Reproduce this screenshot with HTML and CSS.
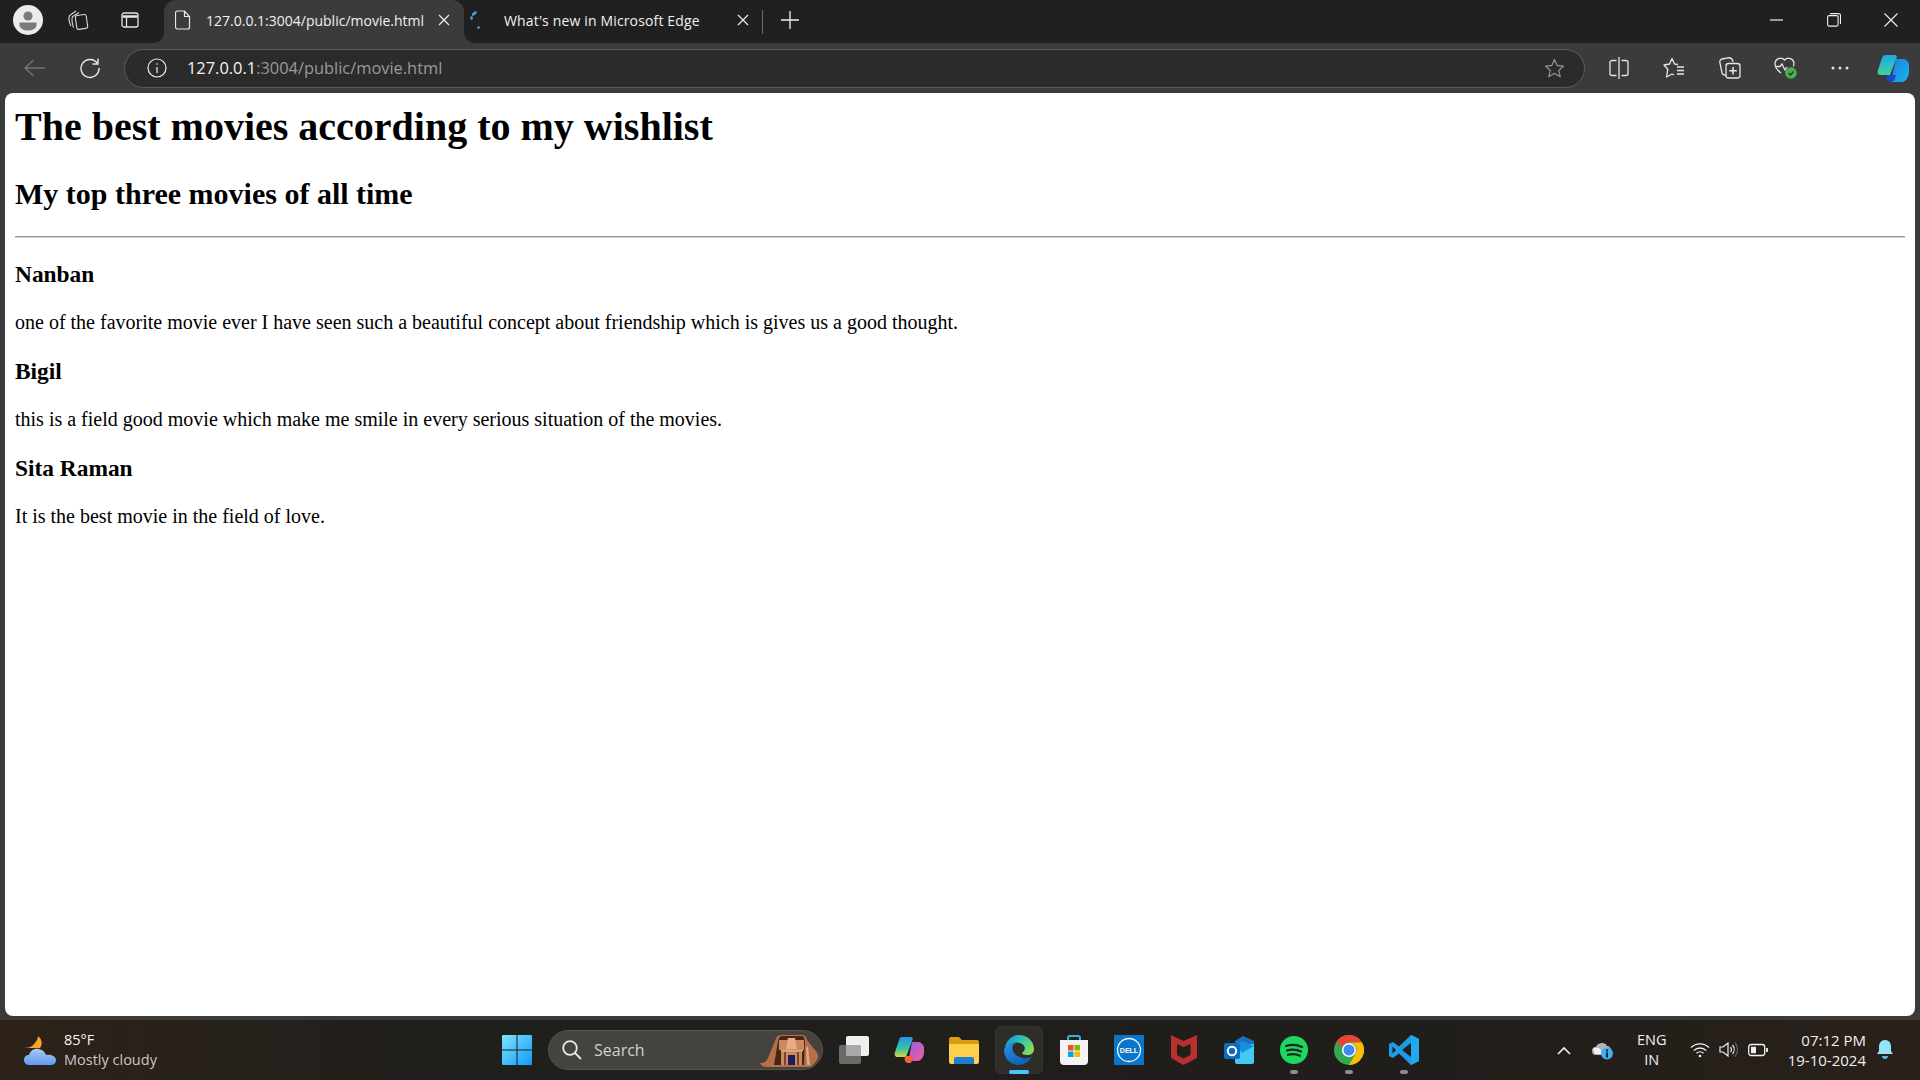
FILE: index.html
```html
<!DOCTYPE html>
<html lang="en">
<head>
<meta charset="utf-8">
<title>The best movies</title>
<link rel="stylesheet" href="styles.css">
</head>
<body>
<div class="app">
  <header class="tabstrip">
    <div class="strip-left">
      <svg class="avatar" width="30" height="30" viewBox="0 0 30 30"><circle cx="15" cy="15" r="15" fill="#ececec"/><circle cx="15" cy="11" r="4.600" fill="#7a7a7a"/><path d="M6.500 17.500h17v2.500c0 3.500-4 5.500-8.500 5.500S6.500 23.500 6.500 20z" fill="#7a7a7a"/></svg>
      <svg class="strip-ic ws" width="22" height="22" viewBox="0 0 22 22" fill="none" stroke="#d8d8d8" stroke-width="1.100"><path d="M4 17C2 13 1.500 9 2.500 6.500L9 2"/><path d="M6.500 18.500C5 14 4.500 10 5.500 7.500L12 3.500"/><rect x="9" y="6" width="11" height="14" rx="2" transform="rotate(-8 14 13)"/></svg>
      <svg class="strip-ic tabs" width="18" height="18" viewBox="0 0 18 18" fill="none" stroke="#e6e6e6" stroke-width="1.300"><rect x="1" y="2" width="16" height="14" rx="2"/><path d="M5.500 6v10"/><path d="M1.500 5.500h15" stroke-width="2.500"/></svg>
    </div>
    <div class="tab active">
      <svg width="16" height="20" viewBox="0 0 16 20" fill="none" stroke="#e8e8e8" stroke-width="1.200"><path d="M2.500 1h7l5 5.500V17a2 2 0 0 1-2 2h-10a2 2 0 0 1-2-2V3a2 2 0 0 1 2-2z"/><path d="M9.500 1v5.500h5"/></svg>
      <span class="tab-title">127.0.0.1:3004/public/movie.html</span>
      <svg class="tab-x" width="12" height="12" viewBox="0 0 12 12" stroke="#e8e8e8" stroke-width="1.300"><path d="M1 1l10 10M11 1L1 11"/></svg>
    </div>
    <div class="tab other">
      <svg class="spin" width="14" height="20" viewBox="0 0 14 20" fill="none" stroke="#4a9fd8" stroke-width="2.600" stroke-linecap="round"><path d="M6.500 2.500L4 4.500"/><path d="M2.500 7.500v1"/><path d="M9.500 17.500h.1"/></svg>
      <span class="tab-title">What's new in Microsoft Edge</span>
      <svg class="tab-x" width="12" height="12" viewBox="0 0 12 12" stroke="#e8e8e8" stroke-width="1.300"><path d="M1 1l10 10M11 1L1 11"/></svg>
    </div>
    <span class="tab-sep"></span>
    <svg class="plus" width="18" height="18" viewBox="0 0 18 18" stroke="#f0f0f0" stroke-width="1.300"><path d="M9 0v18M0 9h18"/></svg>
    <div class="winctl">
      <svg width="14" height="14" viewBox="0 0 14 14" stroke="#f0f0f0" stroke-width="1.200"><path d="M0 7h13"/></svg>
      <svg width="14" height="14" viewBox="0 0 14 14" fill="none" stroke="#f0f0f0" stroke-width="1.100"><rect x=".6" y="2.600" width="10.500" height="10.500" rx="1.500"/><path d="M3 .6h8.500a2 2 0 0 1 2 2V11"/></svg>
      <svg width="14" height="14" viewBox="0 0 14 14" stroke="#f0f0f0" stroke-width="1.100"><path d="M.5.500l13 13M13.500.500l-13 13"/></svg>
    </div>
  </header>
  <nav class="toolbar">
    <svg class="back" width="22" height="18" viewBox="0 0 22 18" fill="none" stroke="#777" stroke-width="1.300"><path d="M21 9H1M9.500 1L1 9l8.500 8"/></svg>
    <svg class="reload" width="22" height="22" viewBox="0 0 22 22" fill="none" stroke="#ececec" stroke-width="1.400"><path d="M18.500 6.500A9 9 0 1 0 20 11"/><path d="M19 1.500v5.500h-5.500"/></svg>
    <div class="addr">
      <svg class="info" width="20" height="20" viewBox="0 0 20 20" fill="none" stroke="#f0f0f0" stroke-width="1.200"><circle cx="10" cy="10" r="9"/><path d="M10 9v6M10 5.300v1.500"/></svg>
      <span class="url"><span class="host">127.0.0.1</span>:3004/public/movie.html</span>
      <svg class="star" width="21" height="21" viewBox="0 0 21 21" fill="none" stroke="#8d8d8d" stroke-width="1.300" stroke-linejoin="round"><path d="M10.500 1.500l2.700 6 6.300.6-4.800 4.300 1.500 6.300-5.700-3.300-5.700 3.300 1.500-6.300L1.500 8.100l6.300-.6z"/></svg>
    </div>
    <div class="tools">
      <svg width="20" height="22" viewBox="0 0 20 22" fill="none" stroke="#e6e6e6" stroke-width="1.300"><path d="M10 0v22"/><path d="M7.500 3.500H3a2 2 0 0 0-2 2v11a2 2 0 0 0 2 2h4.500M12.500 3.500H17a2 2 0 0 1 2 2v11a2 2 0 0 1-2 2h-4.500"/></svg>
      <svg width="22" height="22" viewBox="0 0 22 22" fill="none" stroke="#e6e6e6" stroke-width="1.300" stroke-linejoin="round"><path d="M15 7.500L11.500 7 9 1.500 6.500 7 1 8l3.800 4.200L3.500 20 9 17l2 1"/><path d="M14 10h7M14 13.500h7M14 17h7"/></svg>
      <svg width="22" height="22" viewBox="0 0 22 22" fill="none" stroke="#e6e6e6" stroke-width="1.300"><path d="M7 18H5.500a3 3 0 0 1-2.500-2L1 6a3 3 0 0 1 2-4l6-1.200c2.500-.3 4.500 1 5 4"/><rect x="7" y="6.500" width="14" height="14.500" rx="2.500"/><path d="M14 10v7.500M10.200 13.700h7.600" stroke-width="1.600"/></svg>
      <svg class="health" width="24" height="24" viewBox="0 0 24 24" fill="none"><path d="M7 17C3 14 1 11 1 7.500A5.500 5.500 0 0 1 10.500 4a5.500 5.500 0 0 1 9.500 3.500c0 1-.2 2-.7 3" stroke="#e6e6e6" stroke-width="1.300"/><path d="M1.500 10.500H6l2-2.500 3 6 2-3" stroke="#e6e6e6" stroke-width="1.300"/><circle cx="17" cy="17" r="5.800" fill="#4caf50"/><path d="M14.500 17l2 2 3-3.500" stroke="#1c3d1e" stroke-width="1.500"/></svg>
      <svg class="dots" width="18" height="6" viewBox="0 0 18 6" fill="#e6e6e6"><circle cx="2" cy="3" r="1.500"/><circle cx="9" cy="3" r="1.500"/><circle cx="16" cy="3" r="1.500"/></svg>
      <svg class="copilot" width="32" height="28" viewBox="0 0 32 28"><defs><linearGradient id="cpa" x1="0" y1="0" x2="0" y2="1"><stop offset="0" stop-color="#1fa8e6"/><stop offset="1" stop-color="#3fd29a"/></linearGradient><linearGradient id="cpb" x1="0" y1="0" x2="1" y2="1"><stop offset="0" stop-color="#1d7fe0"/><stop offset="1" stop-color="#16b5ee"/></linearGradient></defs><path d="M9 1h9c2 0 2 2 1.500 3L13 21H4c-3 0-4-2-3-5L5 4c.6-2 2-3 4-3z" fill="url(#cpa)"/><path d="M19 5h7c3 0 5 2 6 5l0 8c0 4-3 10-7 10h-9c-2 0-2-2-1.500-3z" fill="url(#cpb)"/><path d="M10 21h9l-2 6h-5c-3 0-3-3-2-6z" fill="#1c45c9"/></svg>
    </div>
  </nav>
  <main class="page">
    <h1 class="title">The best movies according to my wishlist</h1>
    <h2 class="subtitle">My top three movies of all time</h2>
    <hr class="rule">
    <h3 class="movie">Nanban</h3>
    <p class="blurb">one of the favorite movie ever I have seen such a beautiful concept about friendship which is gives us a good thought.</p>
    <h3 class="movie">Bigil</h3>
    <p class="blurb">this is a field good movie which make me smile in every serious situation of the movies.</p>
    <h3 class="movie">Sita Raman</h3>
    <p class="blurb">It is the best movie in the field of love.</p>
  </main>
  <footer class="taskbar">
    <div class="weather">
      <svg width="34" height="30" viewBox="0 0 34 30"><defs><linearGradient id="cl" x1="0" y1="0" x2="0" y2="1"><stop offset="0" stop-color="#a9c8fa"/><stop offset="1" stop-color="#5f9bec"/></linearGradient></defs><path d="M15 1c4 3 5 8 2 12H1c4 0 8-1 10-4 2-2 4-5 4-8z" fill="#f5a623"/><path d="M7 30c-4 0-6-2-6-5s2-5 5-5c1-4 5-7 10-6 4 1 6 3 7 6 6-1 10 2 10 5 0 3-2 5-6 5z" fill="url(#cl)"/></svg>
      <div class="weather-text"><span class="temp">85°F</span><span class="cond">Mostly cloudy</span></div>
    </div>
    <div class="center">
      <svg class="start" width="30" height="30" viewBox="0 0 30 30"><defs><linearGradient id="win" x1="0" y1="0" x2="1" y2="1"><stop offset="0" stop-color="#7fe3ff"/><stop offset="1" stop-color="#0f9cf5"/></linearGradient></defs><path d="M0 1a1 1 0 0 1 1-1h13.500v14.500H0zM15.500 0H29a1 1 0 0 1 1 1v13.500H15.500zM0 15.500h14.500V30H1a1 1 0 0 1-1-1zM15.500 15.500H30V29a1 1 0 0 1-1 1H15.500z" fill="url(#win)"/></svg>
      <div class="search">
        <svg width="20" height="20" viewBox="0 0 20 20" fill="none" stroke="#e8e8e8" stroke-width="1.800"><circle cx="8" cy="8" r="6.800"/><path d="M13 13l6 6"/></svg>
        <span class="search-text">Search</span>
        <svg class="petra" width="60" height="36" viewBox="0 0 60 36"><path d="M0 31c4 0 6-1 8-5L15 9c1-4 3-6 6-6h21c3 0 4 2 5 5l7 9c3 3 5 6 4 9-2 4-5 8-8 9H8C4 35 1 34 0 31z" fill="#b4704a"/><path d="M14 33L18 9c.5-3 2-5 4-5h20c2 0 2 2 3 5l-1 24z" fill="#4a2516"/><path d="M19 8h25v10H19zM21 19h21v14H21z" fill="#c98a62"/><path d="M28 6h7l2 11h-11z" fill="#e6ad85"/><path d="M21 18h22v1.500H21z" fill="#e6ad85"/><rect x="24" y="20" width="2" height="13" fill="#7a4528"/><rect x="37" y="20" width="2" height="13" fill="#7a4528"/><rect x="28" y="23" width="7" height="10" fill="#1c1a60"/><path d="M48 14l2 19h-3l-1-17z" fill="#e0a98a"/></svg>
      </div>
      <div class="apps">
        <div class="app-btn"><svg width="30" height="28" viewBox="0 0 30 28"><rect x="0" y="9" width="22" height="19" rx="2" fill="#6a6a6a"/><rect x="7" y="0" width="23" height="20" rx="2" fill="#efefef"/><rect x="7" y="9" width="15" height="11" fill="#a9a9a9"/></svg></div>
        <div class="app-btn"><svg width="30" height="28" viewBox="0 0 30 28"><defs><linearGradient id="c2a" x1="0" y1="0" x2="0" y2="1"><stop offset="0" stop-color="#2a8fe8"/><stop offset=".6" stop-color="#35c7a0"/><stop offset="1" stop-color="#d4d63a"/></linearGradient><linearGradient id="c2b" x1="0" y1="0" x2="1" y2="1"><stop offset="0" stop-color="#9a5ce0"/><stop offset="1" stop-color="#f0609a"/></linearGradient></defs><path d="M8 1h9c2 0 2 2 1.500 3L12 21H4c-3 0-4-2-3-5L5 4c.6-2 1-3 3-3z" fill="url(#c2a)"/><path d="M18 6h6c3 0 5 2 6 5v6c0 3-3 8-6 8h-8c-2 0-2-2-1-3z" fill="url(#c2b)"/><path d="M11 20h8l-2 7h-3c-3 0-4-3-3-7z" fill="#f0643a"/></svg></div>
        <div class="app-btn"><svg width="30" height="28" viewBox="0 0 30 28"><path d="M0 3a2 2 0 0 1 2-2h8l3 3h15a2 2 0 0 1 2 2v3H0z" fill="#d99e10"/><path d="M0 8h30v18a2 2 0 0 1-2 2H2a2 2 0 0 1-2-2z" fill="#fdd04b"/><path d="M5 28v-5a2 2 0 0 1 2-2h16a2 2 0 0 1 2 2v5z" fill="#1b7ed0"/></svg></div>
        <div class="app-btn edge"><svg width="30" height="30" viewBox="0 0 30 30"><defs><linearGradient id="eg" x1="0" y1="0" x2="1" y2=".6"><stop offset="0" stop-color="#1588d0"/><stop offset=".55" stop-color="#2fc4b4"/><stop offset="1" stop-color="#86dc5a"/></linearGradient><linearGradient id="eb" x1="0" y1="0" x2=".6" y2="1"><stop offset="0" stop-color="#2295e6"/><stop offset="1" stop-color="#0d62b4"/></linearGradient></defs><path d="M1 12C3 4 9 0 15 0c9 0 15 7 15 14 0 4-3 6-7 6-3 0-5-1-5-2 2-2 4-4 2-7-2-4-10-5-15-1-2 1-3 2-4 2z" fill="url(#eg)"/><path d="M0 15C2 9 7 6.500 12 8c-4 1-4 5-3 8 2 5 8 8 14 7 2 0 4-1 5-2-3 6-8 9-13 9C6 30 0 23 0 15z" fill="url(#eb)"/></svg><span class="pip on"></span></div>
        <div class="app-btn"><svg width="30" height="30" viewBox="0 0 30 30"><path d="M9 5V3a2 2 0 0 1 2-2h8a2 2 0 0 1 2 2v2" fill="none" stroke="#2bb5ee" stroke-width="2"/><path d="M1 5h28v21a4 4 0 0 1-4 4H5a4 4 0 0 1-4-4z" fill="#f3f3f3"/><rect x="9" y="10" width="5.500" height="5.500" fill="#f25022"/><rect x="15.500" y="10" width="5.500" height="5.500" fill="#7fba00"/><rect x="9" y="16.500" width="5.500" height="5.500" fill="#00a4ef"/><rect x="15.500" y="16.500" width="5.500" height="5.500" fill="#ffb900"/></svg></div>
        <div class="app-btn"><svg width="30" height="30" viewBox="0 0 30 30"><rect width="30" height="30" fill="#0b76c9"/><circle cx="15" cy="15" r="11.500" fill="none" stroke="#f2f8fc" stroke-width="1.300"/><text x="15" y="17.500" class="dell">DELL</text></svg></div>
        <div class="app-btn"><svg width="28" height="30" viewBox="0 0 28 30"><path d="M1 0l12.500 6L27 0v23l-13.500 7L1 23z" fill="#b8302e"/><path d="M7 9l6.500 3 7-3v11l-7 3.500L7 20z" fill="#1f1f1c"/></svg></div>
        <div class="app-btn"><svg width="30" height="28" viewBox="0 0 30 28"><path d="M11 5l8-5 11 5v6H11z" fill="#1f6fc0"/><path d="M11 8h19v18a2 2 0 0 1-2 2H13a2 2 0 0 1-2-2z" fill="#44c8f5"/><path d="M11 8l8-3 11 5-12 7z" fill="#1490df"/><rect x="0" y="7" width="16" height="16" rx="2" fill="#0f6cbd"/><circle cx="8" cy="15" r="4.200" fill="none" stroke="#fff" stroke-width="2"/></svg></div>
        <div class="app-btn"><svg width="28" height="28" viewBox="0 0 28 28" fill="none"><circle cx="14" cy="14" r="14" fill="#1ed760"/><path d="M6 10c6-2 11-1.500 16 1M7 14.500c5-1.500 10-1 14 1M8 18.800c4-1 8-.8 12 .9" stroke="#17261b" stroke-width="2.200" stroke-linecap="round"/></svg><span class="pip"></span></div>
        <div class="app-btn"><svg width="30" height="30" viewBox="0 0 30 30"><circle cx="15" cy="15" r="15" fill="#34a853"/><path d="M15 0a15 15 0 0 1 13 7.500H15a7.500 7.500 0 0 0-7 4.500L2.200 7A15 15 0 0 1 15 0z" fill="#ea4335"/><path d="M28 7.500A15 15 0 0 1 15 30l6.500-11.200A7.500 7.500 0 0 0 15 7.500z" fill="#fbbc04"/><circle cx="15" cy="15" r="7" fill="#fff"/><circle cx="15" cy="15" r="5.500" fill="#4285f4"/></svg><span class="pip"></span></div>
        <div class="app-btn"><svg width="30" height="30" viewBox="0 0 30 30"><path d="M22 0l8 4v22l-8 4-12-11.500-6 4.500-4-2V9l4-2 6 4.500z" fill="#1a9ce8"/><path d="M22 0l8 4v22l-8 4z" fill="#22a7f0"/><path d="M22 8v14l-9-7z" fill="#1f1f1c"/><path d="M3.500 11.500v7L7 15z" fill="#1f1f1c"/></svg><span class="pip"></span></div>
      </div>
    </div>
    <div class="tray">
      <svg class="chev" width="14" height="9" viewBox="0 0 14 9" fill="none" stroke="#f0f0f0" stroke-width="1.600"><path d="M1 8l6-6 6 6"/></svg>
      <svg class="cloud" width="22" height="20" viewBox="0 0 22 20"><path d="M4 15a4 4 0 0 1 0-8c1-4 9-6 11-1 3 0 5 3 4 9z" fill="#aeb4ba"/><path d="M1 9c2-2 5-2 8 1v4H3z" fill="#f0f0f0"/><circle cx="15" cy="13.500" r="6" fill="#3fb0f0"/><rect x="14" y="12.500" width="2" height="5" fill="#10202c"/><rect x="14" y="9.500" width="2" height="2" fill="#10202c"/></svg>
      <div class="lang"><span>ENG</span><span>IN</span></div>
      <div class="status">
        <svg width="20" height="16" viewBox="0 0 20 16" fill="none" stroke="#f0f0f0" stroke-width="1.300"><path d="M1 5.500a13 13 0 0 1 18 0M3.800 8.500a9 9 0 0 1 12.400 0M6.500 11.300a5 5 0 0 1 7 0"/><circle cx="10" cy="14" r="1.300" fill="#f0f0f0" stroke="none"/></svg>
        <svg width="20" height="18" viewBox="0 0 20 18" fill="none" stroke="#f0f0f0" stroke-width="1.200"><path d="M1 6v5h3l5 4V2L4 6z"/><path d="M11.500 6a4 4 0 0 1 0 5M13.500 4a7 7 0 0 1 0 9"/><path d="M16 1.500a11 11 0 0 1 0 14" stroke="#666"/></svg>
        <svg width="20" height="14" viewBox="0 0 20 14" fill="none" stroke="#f0f0f0" stroke-width="1.300"><rect x=".7" y="1.500" width="16" height="11" rx="2.500"/><rect x="3" y="3.800" width="5" height="6.400" fill="#f0f0f0" stroke="none"/><path d="M19 5v4" stroke-width="1.800"/></svg>
      </div>
      <div class="clock"><span>07:12 PM</span><span>19-10-2024</span></div>
      <svg class="bell" width="16" height="20" viewBox="0 0 16 20"><path d="M8 0c4 0 6 3 6 7v4l2 3H0l2-3V7c0-4 2-7 6-7z" fill="#92e4fb"/><path d="M5 16h6c0 2-1.500 3-3 3s-3-1-3-3z" fill="#5fbcd8"/></svg>
    </div>
  </footer>
</div>
</body>
</html>
```
FILE: styles.css
```css
* { box-sizing: border-box; }
html, body { margin: 0; height: 100%; overflow: hidden; background: #3b3b3b; }
svg { display: block; flex: none; }
.app { display: flex; flex-direction: column; height: 1080px; font-family: "Open Sans", "Noto Sans", sans-serif; color: #f0f0f0; }

.tabstrip { height: 43px; flex: none; background: #202020; display: flex; align-items: center; }
.strip-left { width: 164px; display: flex; align-items: center; padding-left: 13px; margin-bottom: 3px; }
.strip-ic.ws { margin-left: 24px; }
.strip-ic.tabs { margin-left: 32px; }
.tab { height: 43px; display: flex; align-items: center; font-size: 14px; padding-bottom: 3px; position: relative; }
.tab.active { width: 300px; background: #3b3b3b; border-radius: 12px 12px 0 0; padding-left: 11px; }
.tab.active::before, .tab.active::after { content: ""; position: absolute; bottom: 0; width: 10px; height: 10px; }
.tab.active::before { left: -10px; background: radial-gradient(circle at 0 0, transparent 9.5px, #3b3b3b 10px); }
.tab.active::after { right: -10px; background: radial-gradient(circle at 100% 0, transparent 9.5px, #3b3b3b 10px); }
.tab.active .tab-title { margin-left: 15px; width: 232px; white-space: nowrap; }
.tab.other { width: 298px; padding-left: 5px; }
.tab.other .tab-title { margin-left: 21px; width: 233px; white-space: nowrap; letter-spacing: 0.15px; }
.tab-sep { width: 1px; height: 24px; background: #6a6a6a; }
.plus { margin-left: 18px; margin-bottom: 3px; }
.winctl { margin-left: auto; display: flex; align-items: center; gap: 43px; padding-right: 22px; margin-bottom: 3px; }

.toolbar { height: 50px; flex: none; background: #3b3b3b; display: flex; align-items: center; padding-left: 24px; }
.reload { margin-left: 33px; }
.addr { margin-left: 23px; width: 1461px; height: 39px; border: 1px solid #5c5c5c; border-radius: 20px; background: #2b2b2b; display: flex; align-items: center; padding-left: 22px; padding-right: 19px; }
.url { margin-left: 20px; margin-bottom: 2px; font-size: 16.4px; color: #9a9a9a; white-space: nowrap; }
.host { color: #f5f5f5; }
.star { margin-left: auto; }
.tools { margin-left: 24px; display: flex; align-items: center; gap: 34px; }
.health { margin-left: -1px; }
.dots { margin-left: -1px; }
.copilot { margin-left: -6px; }

.page { flex: none; height: 923px; margin: 0 5px; background: #fff; border-radius: 8px; padding: 10px; font-family: "Liberation Serif", serif; color: #000; font-size: 20px; }
.title { font-size: 40px; font-weight: 700; margin: 0 0 26.8px; }
.subtitle { font-size: 30px; font-weight: 700; margin: 24.9px 0; }
.rule { border: 0; border-top: 1px solid #999; border-bottom: 1px solid #ccc; margin: 10px 0; }
.movie { font-size: 23.4px; font-weight: 700; margin: 23.4px 0; }
.blurb { margin: 20px 0; }

.taskbar { margin-top: 4px; height: 60px; flex: none; background: linear-gradient(90deg, #2d2219 0%, #1f1f1c 25%, #201e1b 75%, #2a2019 100%); display: flex; align-items: center; position: relative; }
.weather { display: flex; align-items: center; padding-left: 23px; width: 502px; gap: 7px; }
.weather-text { display: flex; flex-direction: column; font-size: 14.5px; line-height: 20px; }
.temp { color: #f5f5f5; }
.cond { color: #c8c8c8; }
.center { display: flex; align-items: center; }
.start { margin-right: 16px; }
.search { width: 275px; height: 40px; border-radius: 20px; background: #45433d; border: 1px solid #55534c; display: flex; align-items: center; padding-left: 13px; position: relative; }
.search-text { margin-left: 12px; font-size: 16px; color: #d0d0d0; }
.petra { position: absolute; right: 2px; top: 1px; }
.apps { display: flex; align-items: center; margin-left: 3px; }
.app-btn { width: 55px; height: 48px; display: flex; align-items: center; justify-content: center; position: relative; }
.edge::before { content: ""; position: absolute; inset: 0 3.5px; background: #2f2d2a; border: 1px solid #363430; border-radius: 6px; }
.edge svg { position: relative; }
.pip { position: absolute; bottom: 0; left: 50%; width: 8px; height: 4px; margin-left: -4px; border-radius: 2px; background: #8d8d8d; }
.pip.on { width: 20px; margin-left: -10px; background: #4cc2ff; }
.dell { font: 700 7px "Liberation Sans", sans-serif; fill: #fff; text-anchor: middle; }

.tray { position: absolute; right: 0; top: 0; height: 60px; display: flex; align-items: center; padding-right: 27px; }
.chev { margin-right: 21px; }
.cloud { margin-right: 21px; }
.lang { display: flex; flex-direction: column; align-items: center; font-size: 14.5px; line-height: 20px; width: 34px; margin-right: 21px; }
.status { display: flex; align-items: center; gap: 9px; }
.clock { display: flex; flex-direction: column; align-items: flex-end; font-size: 15px; line-height: 20px; margin-left: 20px; margin-right: 11px; }
```
